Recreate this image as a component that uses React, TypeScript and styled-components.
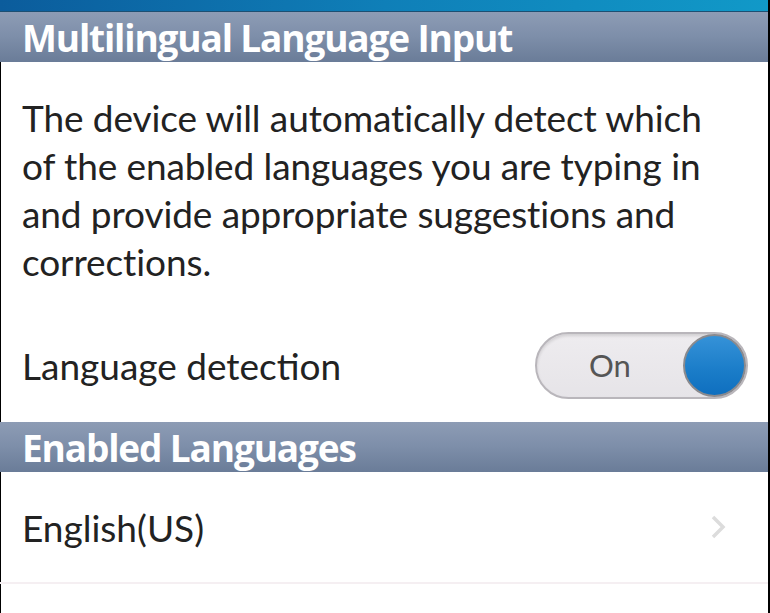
import React from "react";
import styled, { createGlobalStyle } from "styled-components";

const Global = createGlobalStyle`
  html, body { margin: 0; padding: 0; background: #fff; }
  body { width: 770px; height: 613px; overflow: hidden; }
`;

const Page = styled.div`
  width: 770px;
  height: 613px;
  box-sizing: border-box;
  border-right: 2px solid #000;
  background: #fff;
  display: flex;
  flex-direction: column;
  overflow: hidden;
`;

const TopBar = styled.div`
  flex: none;
  height: 11px;
  background: linear-gradient(90deg, #0b5c9c 0%, #0f7fb8 50%, #1199c8 100%);
  border-bottom: 1px solid #1d4f72;
`;

const SectionHeader = styled.div`
  flex: none;
  height: 50px;
  box-sizing: border-box;
  padding-left: 22px;
  display: flex;
  align-items: center;
  background: linear-gradient(180deg, #8d9cb5 0%, #7d8ea9 50%, #6a7c98 100%);
  color: #fff;
  font-family: "Open Sans", "Liberation Sans", sans-serif;
  font-weight: 700;
  font-size: 37px;
  letter-spacing: -1.15px;
  line-height: 1;
`;

const Content = styled.div<{ $fill?: boolean }>`
  flex: ${(p) => (p.$fill ? "1" : "none")};
  box-shadow: inset 1px 0 0 #000;
  font-family: Lato, "Open Sans", sans-serif;
  color: #222;
`;

const Paragraph = styled.p`
  margin: 0;
  padding: 32px 50px 0 22px;
  font-size: 37px;
  letter-spacing: -0.1px;
  line-height: 48px;
`;

const Row = styled.div<{ $h: number; $top?: number; $line?: boolean }>`
  height: ${(p) => p.$h}px;
  box-sizing: border-box;
  display: flex;
  align-items: center;
  justify-content: space-between;
  padding: ${(p) => p.$top ?? 0}px 22px 0 22px;
  font-size: 37px;
  border-bottom: ${(p) => (p.$line ? "2px solid #f5eff2" : "none")};
`;

const Toggle = styled.div`
  width: 213px;
  height: 67px;
  box-sizing: border-box;
  border-radius: 34px;
  border: 2px solid #b9b6bb;
  background: linear-gradient(180deg, #eeecef 0%, #e6e4e8 100%);
  box-shadow: inset 0 2px 3px rgba(0, 0, 0, 0.12);
  display: flex;
  align-items: center;
  justify-content: space-between;
  padding: 0 0 0 52px;
  margin-right: -2px;
`;

const ToggleLabel = styled.span`
  font-size: 31px;
  color: #555;
`;

const Knob = styled.div`
  width: 63px;
  height: 63px;
  box-sizing: border-box;
  border-radius: 50%;
  border: 2px solid #8a8a8e;
  background: linear-gradient(180deg, #3592d8 0%, #1a7cc8 60%, #0f6fbf 100%);
`;

const Chevron = styled.svg`
  width: 16px;
  height: 24px;
  margin-right: 20px;
`;

export default function App() {
  return (
    <>
      <Global />
      <Page>
        <TopBar />
        <SectionHeader>Multilingual Language Input</SectionHeader>
        <Content>
          <Paragraph>
            The device will automatically detect which of the enabled languages you are typing in
            and provide appropriate suggestions and corrections.
          </Paragraph>
          <Row $h={136} $top={22}>
            <span>Language detection</span>
            <Toggle>
              <ToggleLabel>On</ToggleLabel>
              <Knob />
            </Toggle>
          </Row>
        </Content>
        <SectionHeader>Enabled Languages</SectionHeader>
        <Content $fill>
          <Row $h={112} $line>
            <span>English(US)</span>
            <Chevron viewBox="0 0 16 24">
              <path d="M3 2 L13 12 L3 22" fill="none" stroke="#dcdcdc" strokeWidth="3.5" />
            </Chevron>
          </Row>
        </Content>
      </Page>
    </>
  );
}
